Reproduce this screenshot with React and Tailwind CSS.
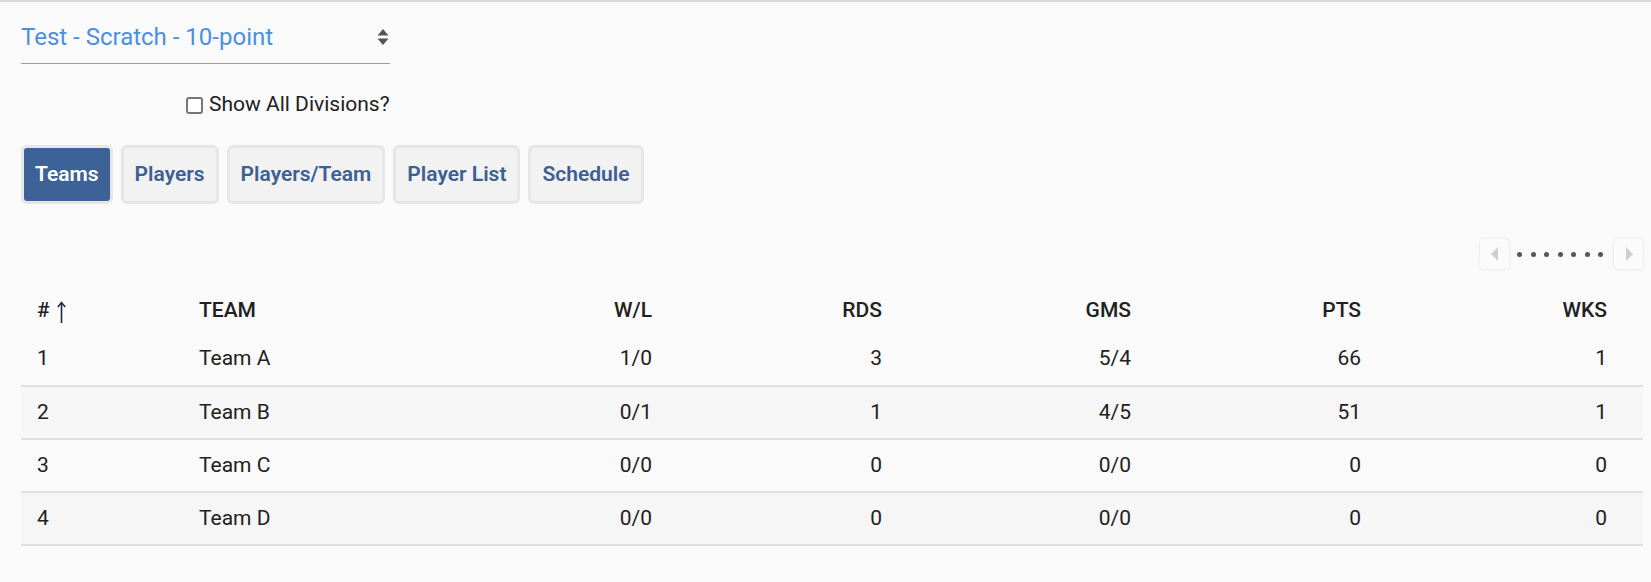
import { useState } from "react";

const rows = [
  { rank: 1, team: "Team A", wl: "1/0", rds: 3, gms: "5/4", pts: 66, wks: 1 },
  { rank: 2, team: "Team B", wl: "0/1", rds: 1, gms: "4/5", pts: 51, wks: 1 },
  { rank: 3, team: "Team C", wl: "0/0", rds: 0, gms: "0/0", pts: 0, wks: 0 },
  { rank: 4, team: "Team D", wl: "0/0", rds: 0, gms: "0/0", pts: 0, wks: 0 },
];

const tabs = ["Teams", "Players", "Players/Team", "Player List", "Schedule"];

const App = () => {
  const [active, setActive] = useState("Teams");
  const [showAll, setShowAll] = useState(false);

  return (
    <div
      className="min-h-[582px] border-t-2 border-[#d6d6d6] bg-[#fafafa] pl-[21px] pr-[8px] text-[#212121]"
      style={{ fontFamily: "Roboto, 'Noto Sans', sans-serif" }}
    >
      {/* division select */}
      <div className="flex h-[62px] w-[369px] items-center justify-between border-b border-[#9e9e9e] pt-[8px]">
        <span className="text-[24px] text-[#4a90e2]">Test - Scratch - 10-point</span>
        <svg width="12" height="18" viewBox="0 0 12 18" className="mr-[1px]">
          <path d="M6 1 L11.5 7.5 L0.5 7.5 Z" fill="#555" />
          <path d="M6 17 L11.5 10.5 L0.5 10.5 Z" fill="#555" />
        </svg>
      </div>

      <label className="ml-[165px] mt-[27px] flex h-[28px] items-center gap-[6px] text-[21px]">
        <input
          type="checkbox"
          checked={showAll}
          onChange={(e) => setShowAll(e.target.checked)}
          className="h-[17px] w-[17px] appearance-none rounded-[3px] border-2 border-[#767676] bg-white"
        />
        Show All Divisions?
      </label>

      <div className="mt-[26px] flex gap-[8px]">
        {tabs.map((t) => (
          <button
            key={t}
            onClick={() => setActive(t)}
            className={`h-[59px] rounded-[6px] border-[3px] border-[#e6e6e6] px-[11px] text-[21px] font-semibold ${
              active === t ? "bg-[#3d6298] text-white" : "bg-[#f2f2f2] text-[#3d5f93]"
            }`}
          >
            {t}
          </button>
        ))}
      </div>

      {/* column pager */}
      <div className="mt-[35px] flex items-center justify-end">
        <button className="flex h-[30px] w-[29px] items-center justify-center rounded-[4px] bg-[#fbfbfb] shadow-[0_0_3px_rgba(0,0,0,0.12)]">
          <svg width="8" height="14" viewBox="0 0 8 14">
            <path d="M7 0 L7 14 L0 7 Z" fill="#cfcfcf" />
          </svg>
        </button>
        <div className="flex gap-[8.5px] pl-[8px] pr-[11px]">
          {[0, 1, 2, 3, 4, 5, 6].map((i) => (
            <span key={i} className="h-[5px] w-[5px] rounded-full bg-[#555]" />
          ))}
        </div>
        <button className="flex h-[30px] w-[29px] items-center justify-center rounded-[4px] bg-[#fbfbfb] shadow-[0_0_3px_rgba(0,0,0,0.12)]">
          <svg width="8" height="14" viewBox="0 0 8 14">
            <path d="M1 0 L1 14 L8 7 Z" fill="#cfcfcf" />
          </svg>
        </button>
      </div>

      <table className="mt-[20px] w-[1622px] table-fixed border-collapse text-[21px]">
        <colgroup>
          <col className="w-[162px]" />
          <col className="w-[240px]" />
          <col className="w-[245px]" />
          <col className="w-[230px]" />
          <col className="w-[249px]" />
          <col className="w-[230px]" />
          <col className="w-[266px]" />
        </colgroup>
        <thead>
          <tr className="h-[44px]">
            <th className="pl-[16px] text-left font-medium">
              <span className="inline-flex items-center gap-[7px]">
                #
                <svg width="9" height="22" viewBox="0 0 9 22" className="mt-[2px]">
                  <path d="M4.5 2 L4.5 22" stroke="#1c2b45" strokeWidth="1.6" />
                  <path d="M0.8 6 L4.5 1.5 L8.2 6" stroke="#1c2b45" strokeWidth="1.5" fill="none" />
                </svg>
              </span>
            </th>
            <th className="pl-[16px] text-left font-medium">TEAM</th>
            <th className="pr-[16px] text-right font-medium">W/L</th>
            <th className="pr-[16px] text-right font-medium">RDS</th>
            <th className="pr-[16px] text-right font-medium">GMS</th>
            <th className="pr-[16px] text-right font-medium">PTS</th>
            <th className="pr-[36px] text-right font-medium">WKS</th>
          </tr>
        </thead>
        <tbody>
          {rows.map((r, i) => (
            <tr
              key={r.rank}
              className={`h-[53px] border-b-2 border-[#e0e0e0] ${i % 2 === 1 ? "bg-[#f6f6f6]" : ""}`}
            >
              <td className="pl-[16px]">{r.rank}</td>
              <td className="pl-[16px]">{r.team}</td>
              <td className="pr-[16px] text-right">{r.wl}</td>
              <td className="pr-[16px] text-right">{r.rds}</td>
              <td className="pr-[16px] text-right">{r.gms}</td>
              <td className="pr-[16px] text-right">{r.pts}</td>
              <td className="pr-[36px] text-right">{r.wks}</td>
            </tr>
          ))}
        </tbody>
      </table>
    </div>
  );
};

export default App;
